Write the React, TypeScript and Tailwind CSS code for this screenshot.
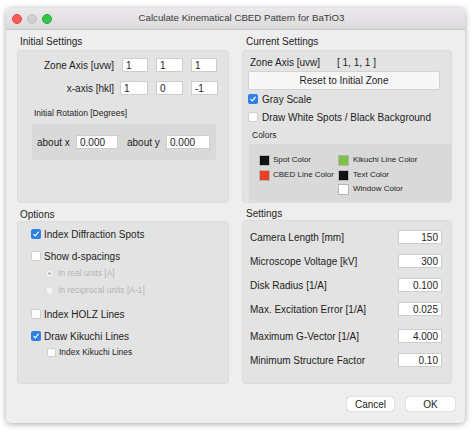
import React from 'react';

function Check({ checked, small }: { checked?: boolean; small?: boolean }) {
  const size = small ? 'w-[9px] h-[9px]' : 'w-[10px] h-[10px]';
  if (checked) {
    return (
      <span className={`${size} shrink-0 rounded-[2px] bg-[#2f7fe6] flex items-center justify-center`}>
        <svg viewBox="0 0 10 10" className="w-[8px] h-[8px]">
          <path d="M2.3 5.4 L4.2 7.3 L7.8 2.6" fill="none" stroke="#fff" strokeWidth="1.5" strokeLinecap="round" strokeLinejoin="round" />
        </svg>
      </span>
    );
  }
  return <span className={`${size} shrink-0 rounded-[2px] bg-white border border-[#cfcfcf]`} />;
}

function Radio({ selected }: { selected?: boolean }) {
  return (
    <span className="w-[9px] h-[9px] shrink-0 rounded-full bg-[#f3f3f3] border border-[#dadada] flex items-center justify-center">
      {selected && <span className="w-[3px] h-[3px] rounded-full bg-[#b8b8b8]" />}
    </span>
  );
}

function Field({ value, w, right }: { value: string; w: string; right?: boolean }) {
  return (
    <div className={`${w} h-[14px] bg-white border border-[#cdcdcd] flex items-center px-[3px] text-[10px] text-[#1e1e1e] ${right ? 'justify-end' : ''}`}>
      {value}
    </div>
  );
}

function Swatch({ color }: { color: string }) {
  return <span className={`w-[11px] h-[11px] shrink-0 border border-[#b5b5b5] ${color}`} />;
}

function SettingRow({ label, value, mt }: { label: string; value: string; mt: string }) {
  return (
    <div className={`flex items-center h-[14px] ${mt}`}>
      <span className="ml-[7px] flex-1">{label}</span>
      <Field value={value} w="w-[44px]" right />
      <span className="w-[9px]" />
    </div>
  );
}

export default function App() {
  return (
    <div
      className="w-[472px] h-[430px] bg-white pl-[6px] pt-[8px] text-[10px] text-[#1d1d1d]"
      style={{ fontFamily: '"Liberation Sans", Arial, sans-serif' }}
    >
      <div className="w-[459px] h-[415px] rounded-[5px] bg-[#efeeee] shadow-[0_1px_6px_rgba(0,0,0,0.35)] flex flex-col overflow-hidden">
        {/* title bar */}
        <div className="h-[22px] shrink-0 relative flex items-center bg-gradient-to-b from-[#ebe9eb] to-[#dcdadc] border-b border-[#c8c6c8]">
          <div className="flex gap-[5px] pl-[6px]">
            <span className="w-[10px] h-[10px] rounded-full bg-[#fb5d56] border border-[#e2463f]" />
            <span className="w-[10px] h-[10px] rounded-full bg-[#d0cfd0] border border-[#c2c1c2]" />
            <span className="w-[10px] h-[10px] rounded-full bg-[#34c84a] border border-[#27aa37]" />
          </div>
          <span className="absolute left-0 right-0 text-center text-[9.7px] text-[#3a3a3a] pl-[12px]">
            Calculate Kinematical CBED Pattern for BaTiO3
          </span>
        </div>

        <div className="flex gap-[13px] pl-[11px] pr-[13px]">
          {/* left column */}
          <div className="w-[212px] flex flex-col">
            <div className="h-[20px] flex items-center pt-[3px] pl-[3px]">Initial Settings</div>
            <div className="h-[153px] bg-[#e4e3e3] border border-[#dcdbdb] rounded-[4px] flex flex-col">
              <div className="flex items-center h-[14px] mt-[7px]">
                <span className="w-[96px] text-right">Zone Axis [uvw]</span>
                <span className="w-[8px]" />
                <Field value="1" w="w-[26px]" />
                <span className="w-[8px]" />
                <Field value="1" w="w-[27px]" />
                <span className="w-[8px]" />
                <Field value="1" w="w-[26px]" />
              </div>
              <div className="flex items-center h-[14px] mt-[9px]">
                <span className="w-[96px] text-right">x-axis [hkl]</span>
                <span className="w-[6px]" />
                <Field value="1" w="w-[28px]" />
                <span className="w-[8px]" />
                <Field value="0" w="w-[27px]" />
                <span className="w-[8px]" />
                <Field value="-1" w="w-[27px]" />
              </div>
              <div className="h-[12px] mt-[12px] pl-[16px] flex items-center text-[8.5px]">Initial Rotation [Degrees]</div>
              <div className="ml-[14px] w-[184px] h-[36px] mt-[5px] bg-[#dad9d9] rounded-[3px] flex items-center">
                <span className="ml-[5px] w-[39px]">about x</span>
                <Field value="0.000" w="w-[42px]" />
                <span className="ml-[9px] w-[39px]">about y</span>
                <Field value="0.000" w="w-[44px]" />
              </div>
            </div>

            <div className="h-[18px] flex items-center pt-[4px] pl-[3px]">Options</div>
            <div className="h-[163px] bg-[#e4e3e3] border border-[#dcdbdb] rounded-[4px] flex flex-col">
              <div className="flex items-center h-[14px] mt-[5px] pl-[13px] gap-[3px]">
                <Check checked />
                <span>Index Diffraction Spots</span>
              </div>
              <div className="flex items-center h-[14px] mt-[8px] pl-[13px] gap-[3px]">
                <Check />
                <span>Show d-spacings</span>
              </div>
              <div className="flex items-center h-[14px] mt-[3px] pl-[27px] gap-[4px] text-[8.5px] text-[#b4b4b4]">
                <Radio selected />
                <span>In real units [A]</span>
              </div>
              <div className="flex items-center h-[14px] mt-[3px] pl-[27px] gap-[4px] text-[8.5px] text-[#b4b4b4]">
                <Radio />
                <span>In reciprocal units [A-1]</span>
              </div>
              <div className="flex items-center h-[14px] mt-[10px] pl-[13px] gap-[3px]">
                <Check />
                <span>Index HOLZ Lines</span>
              </div>
              <div className="flex items-center h-[14px] mt-[8px] pl-[13px] gap-[3px]">
                <Check checked />
                <span>Draw Kikuchi Lines</span>
              </div>
              <div className="flex items-center h-[14px] mt-[2px] pl-[29px] gap-[3px] text-[8.5px]">
                <Check small />
                <span>Index Kikuchi Lines</span>
              </div>
            </div>
          </div>

          {/* right column */}
          <div className="w-[210px] flex flex-col">
            <div className="h-[20px] flex items-center pt-[3px] pl-[4px]">Current Settings</div>
            <div className="h-[153px] bg-[#e4e3e3] border border-[#dcdbdb] rounded-[4px] flex flex-col">
              <div className="flex items-center h-[14px] mt-[4px]">
                <span className="ml-[7px] w-[87px]">Zone Axis [uvw]</span>
                <span>[ 1, 1, 1 ]</span>
              </div>
              <div className="ml-[5px] w-[192px] h-[19px] mt-[2px] bg-[#f6f6f6] border border-[#d3d3d3] rounded-[2px] flex items-center justify-center">
                Reset to Initial Zone
              </div>
              <div className="flex items-center h-[14px] mt-[2px] pl-[5px] gap-[4px]">
                <Check checked />
                <span>Gray Scale</span>
              </div>
              <div className="flex items-center h-[14px] mt-[4px] pl-[5px] gap-[4px]">
                <Check />
                <span>Draw White Spots / Black Background</span>
              </div>
              <div className="h-[12px] mt-[5px] pl-[9px] flex items-center text-[8.5px]">Colors</div>
              <div className="ml-[6px] w-[203px] h-[57px] mt-[3px] bg-[#dad9d9] rounded-[3px] flex text-[8px] whitespace-nowrap">
                <div className="w-[89px] shrink-0 flex flex-col pl-[10px]">
                  <div className="flex items-center gap-[3px] h-[12px] mt-[10px]">
                    <Swatch color="bg-[#111]" />
                    <span>Spot Color</span>
                  </div>
                  <div className="flex items-center gap-[3px] h-[12px] mt-[3px]">
                    <Swatch color="bg-[#ec3f26]" />
                    <span>CBED Line Color</span>
                  </div>
                </div>
                <div className="flex flex-col">
                  <div className="flex items-center gap-[4px] h-[12px] mt-[10px]">
                    <Swatch color="bg-[#7fc145]" />
                    <span>Kikuchi Line Color</span>
                  </div>
                  <div className="flex items-center gap-[4px] h-[12px] mt-[3px]">
                    <Swatch color="bg-[#111]" />
                    <span>Text Color</span>
                  </div>
                  <div className="flex items-center gap-[4px] h-[12px] mt-[2px]">
                    <Swatch color="bg-white" />
                    <span>Window Color</span>
                  </div>
                </div>
              </div>
            </div>

            <div className="h-[17px] flex items-center pt-[4px] pl-[4px]">Settings</div>
            <div className="h-[164px] bg-[#e4e3e3] border border-[#dcdbdb] rounded-[4px] flex flex-col">
              <SettingRow label="Camera Length [mm]" value="150" mt="mt-[9px]" />
              <SettingRow label="Microscope Voltage [kV]" value="300" mt="mt-[10px]" />
              <SettingRow label="Disk Radius [1/A]" value="0.100" mt="mt-[10px]" />
              <SettingRow label="Max. Excitation Error  [1/A]" value="0.025" mt="mt-[10px]" />
              <SettingRow label="Maximum G-Vector [1/A]" value="4.000" mt="mt-[13px]" />
              <SettingRow label="Minimum Structure Factor" value="0.10" mt="mt-[10px]" />
            </div>
          </div>
        </div>

        <div className="flex justify-end gap-[12px] pr-[10px] mt-[13px]">
          <div className="w-[47px] h-[14px] bg-white rounded-[3px] shadow-[0_0_1px_rgba(0,0,0,0.45)] flex items-center justify-center">Cancel</div>
          <div className="w-[49px] h-[14px] bg-white rounded-[3px] shadow-[0_0_1px_rgba(0,0,0,0.45)] flex items-center justify-center">OK</div>
        </div>
      </div>
    </div>
  );
}
